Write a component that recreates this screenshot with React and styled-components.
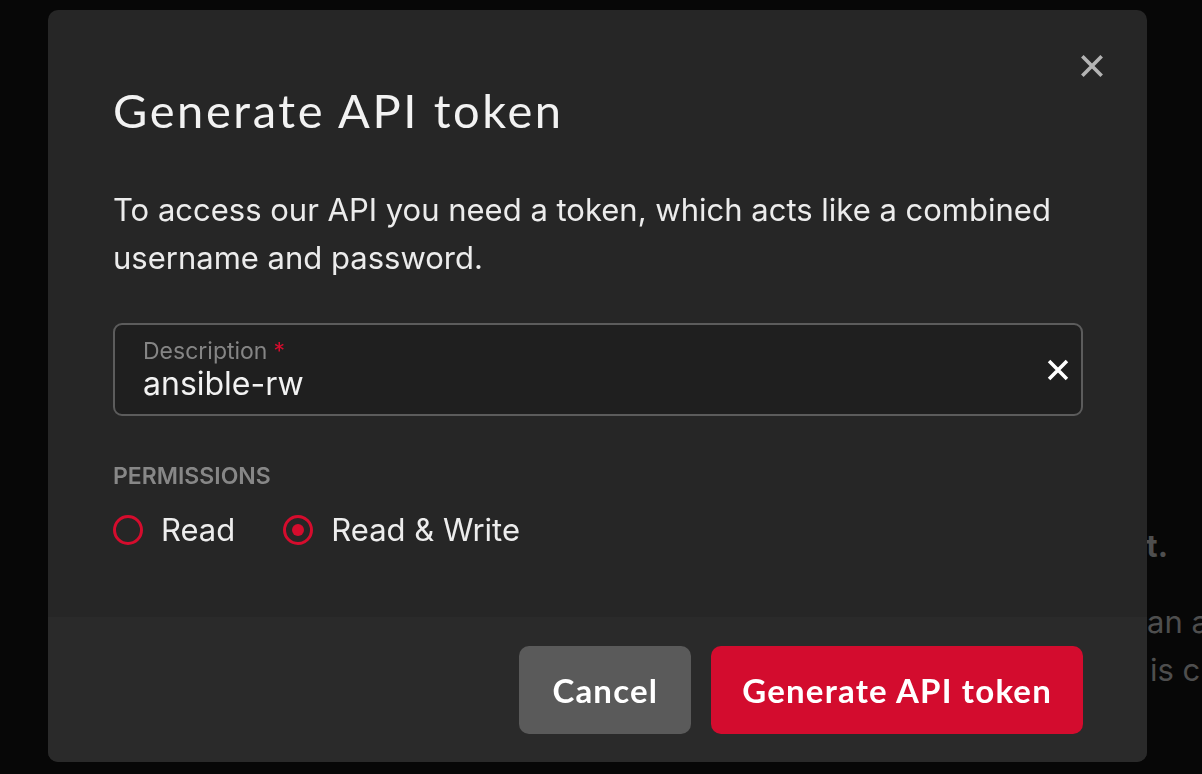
import React from 'react';
import styled, { createGlobalStyle } from 'styled-components';

const GlobalStyle = createGlobalStyle`
  html, body {
    margin: 0;
    height: 100%;
    background: #070707;
    overflow: hidden;
  }
  body {
    font-family: Inter, "Liberation Sans", sans-serif;
    color: #f0f0f0;
  }
`;

// page sitting behind the dialog, mostly covered by it
const Backdrop = styled.div`
  padding-top: 522px;
  color: #4e4e4e;
  font-size: 31px;
  white-space: nowrap;
  overflow: hidden;
`;

const BackdropHeading = styled.div`
  width: 1168px;
  text-align: right;
  font-weight: 700;
  line-height: 48px;
  margin-bottom: 28px;
`;

const BackdropLine = styled.div`
  display: grid;
  grid-template-columns: ${(p) => p.$split}px auto;
  line-height: 48px;

  span:first-child {
    text-align: right;
  }
`;

const Dialog = styled.div`
  position: fixed;
  top: 10px;
  left: 48px;
  width: 1099px;
  height: 752px;
  display: flex;
  flex-direction: column;
  background: #262626;
  border-radius: 10px;
  overflow: hidden;
`;

const CloseButton = styled.button`
  position: absolute;
  top: 44px;
  right: 43px;
  width: 24px;
  height: 24px;
  padding: 0;
  border: 0;
  background: none;
  color: #b4b4b4;
  cursor: pointer;
  svg {
    display: block;
  }
`;

const Body = styled.div`
  flex: 1;
  padding: 72px 64px 0 65px;
`;

const Title = styled.h2`
  margin: 0;
  font-family: Lato, "Liberation Sans", sans-serif;
  font-weight: 400;
  font-size: 47px;
  line-height: 56px;
  letter-spacing: 2.6px;
  color: #f2f2f2;
`;

const Intro = styled.p`
  margin: 48px 0 0;
  font-size: 31px;
  line-height: 48px;
  color: #ececec;
`;

const Field = styled.div`
  margin-top: 41px;
  height: 93px;
  box-sizing: border-box;
  border: 2px solid #5c5c5c;
  border-radius: 9px;
  background: #1f1f1f;
  display: flex;
  align-items: center;
  padding: 0 9px 0 28px;
`;

const FieldText = styled.div`
  flex: 1;
  display: flex;
  flex-direction: column;
`;

const FieldLabel = styled.label`
  font-size: 23px;
  line-height: 28px;
  color: #858585;

  span {
    color: #d50c2d;
    margin-left: 6px;
  }
`;

const FieldValue = styled.div`
  font-size: 32px;
  line-height: 38px;
  color: #f2f2f2;
`;

const ClearButton = styled.button`
  width: 28px;
  height: 28px;
  padding: 0;
  border: 0;
  background: none;
  color: #ffffff;
  display: flex;
  align-items: center;
  justify-content: center;
`;

const SectionLabel = styled.div`
  margin-top: 46px;
  font-size: 23px;
  line-height: 28px;
  font-weight: 600;
  color: #878787;
  text-transform: uppercase;
`;

const RadioGroup = styled.div`
  margin-top: 16px;
  display: flex;
  gap: 48px;
`;

const RadioOption = styled.label`
  display: flex;
  align-items: center;
  gap: 18px;
  font-size: 31px;
  line-height: 48px;
  color: #ededed;
  cursor: pointer;
`;

const RadioMark = styled.span`
  width: 30px;
  height: 30px;
  box-sizing: border-box;
  border: 3px solid #d50c2d;
  border-radius: 50%;
  display: flex;
  align-items: center;
  justify-content: center;

  &::after {
    content: '';
    width: 12px;
    height: 12px;
    border-radius: 50%;
    background: ${(p) => (p.$checked ? '#d50c2d' : 'transparent')};
  }
`;

const Footer = styled.div`
  display: flex;
  justify-content: flex-end;
  gap: 20px;
  padding: 29px 64px 28px;
  background: #2a2a2a;
`;

const Button = styled.button`
  height: 88px;
  padding: 0 ${(p) => (p.$primary ? 31 : 33)}px;
  border: 0;
  border-radius: 10px;
  font-family: Lato, "Liberation Sans", sans-serif;
  font-weight: 700;
  font-size: 33px;
  letter-spacing: 1.2px;
  color: #ffffff;
  background: ${(p) => (p.$primary ? '#d30c2e' : '#5a5a5a')};
  cursor: pointer;
`;

const Cross = ({ size, stroke }) => (
  <svg width={size} height={size} viewBox="0 0 20 20" fill="none">
    <path
      d="M3 3L17 17M17 3L3 17"
      stroke="currentColor"
      strokeWidth={stroke}
      strokeLinecap="square"
    />
  </svg>
);

const permissions = [
  { id: 'read', label: 'Read' },
  { id: 'rw', label: 'Read & Write' },
];

export default function App() {
  const [perm, setPerm] = React.useState('rw');

  return (
    <>
      <GlobalStyle />
      <Backdrop>
        <BackdropHeading>yet.</BackdropHeading>
        <BackdropLine $split={1147}>
          <span>as&nbsp;</span>
          <span>an a</span>
        </BackdropLine>
        <BackdropLine $split={1150}>
          <span>and&nbsp;</span>
          <span>is c</span>
        </BackdropLine>
      </Backdrop>

      <Dialog role="dialog">
        <CloseButton aria-label="Close">
          <Cross size={24} stroke={3} />
        </CloseButton>
        <Body>
          <Title>Generate API token</Title>
          <Intro>
            To access our API you need a token, which acts like a combined
            username and password.
          </Intro>
          <Field>
            <FieldText>
              <FieldLabel>
                Description<span>*</span>
              </FieldLabel>
              <FieldValue>ansible-rw</FieldValue>
            </FieldText>
            <ClearButton aria-label="Clear">
              <Cross size={22} stroke={3.2} />
            </ClearButton>
          </Field>
          <SectionLabel>Permissions</SectionLabel>
          <RadioGroup>
            {permissions.map((p) => (
              <RadioOption key={p.id} onClick={() => setPerm(p.id)}>
                <RadioMark $checked={perm === p.id} />
                {p.label}
              </RadioOption>
            ))}
          </RadioGroup>
        </Body>
        <Footer>
          <Button>Cancel</Button>
          <Button $primary>Generate API token</Button>
        </Footer>
      </Dialog>
    </>
  );
}
